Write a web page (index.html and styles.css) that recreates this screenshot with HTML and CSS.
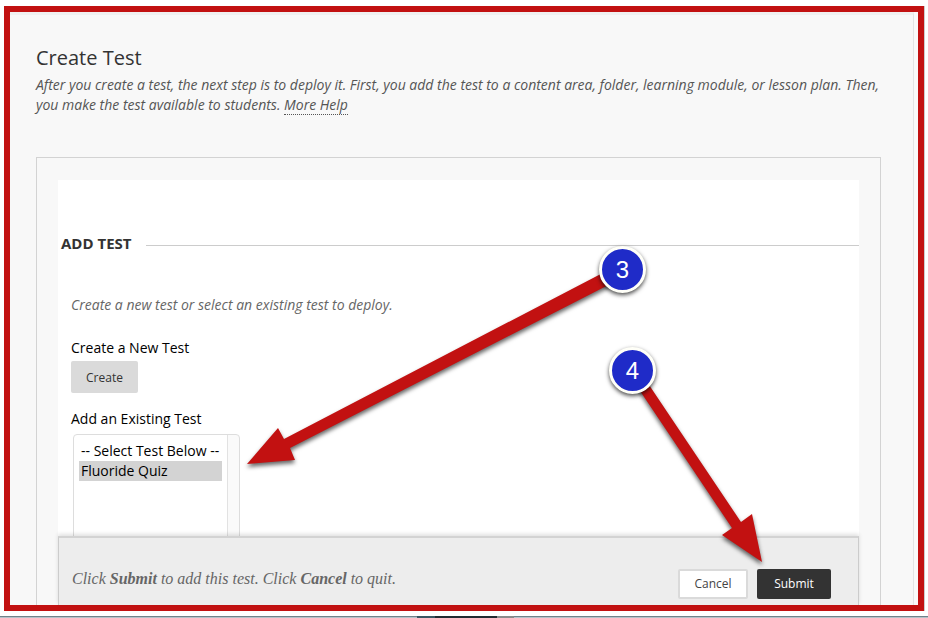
FILE: index.html
```
<!DOCTYPE html>
<html lang="en">
  <head>
    <meta charset="UTF-8" />
    <meta name="viewport" content="width=device-width, initial-scale=1.0" />
    <title>Create Test</title>
    <link rel="stylesheet" href="styles.css">
  </head>
  <body>
    <main class="frame">
      <div class="page">
        <header>
          <h1>Create Test</h1>
          <p class="help">
            After you create a test, the next step is to deploy it. First, you add the test to a content area, folder, learning module, or lesson plan. Then, you make the test available to students. <a href="#">More Help</a>
          </p>
        </header>

        <form class="panel">
          <div class="content">
            <h2><span>ADD TEST</span></h2>
            <div class="fields">
              <p class="hint">Create a new test or select an existing test to deploy.</p>
              <label for="create">Create a New Test</label>
              <button type="button" class="create" id="create">Create</button>
              <label for="tests">Add an Existing Test</label>
              <select id="tests" size="6">
                <option>-- Select Test Below --</option>
                <option selected>Fluoride Quiz</option>
              </select>
            </div>
          </div>
          <footer>
            <p>Click <b>Submit</b> to add this test. Click <b>Cancel</b> to quit.</p>
            <button type="button" class="cancel">Cancel</button>
            <button type="button" class="submit">Submit</button>
          </footer>
        </form>
      </div>
    </main>
    <div class="taskbar"></div>

    <!-- step arrows -->
    <svg class="arrows" width="928" height="618" viewBox="0 0 928 618">
      <polygon points="247,464 278,428 284,439 618,265 624,277 290,448 295,460" />
      <polygon points="762,562 722,535 732,528 626,370 635,364 741,522 752,514" />
    </svg>
    <span class="step step-3">3</span>
    <span class="step step-4">4</span>
  </body>
</html>
```

FILE: styles.css
```
* {
  box-sizing: border-box;
  margin: 0;
  padding: 0;
  font-family: "Open Sans", "Noto Sans", sans-serif;
}
body {
  position: relative;
  display: flex;
  flex-direction: column;
  height: 100vh;
  padding: 6px 4px 0 4px;
  overflow: hidden;
  background-color: white;
}
.frame {
  display: flex;
  flex: 1;
  min-height: 0;
  border: 6px solid #c21111;
  background-color: #fafafa;
  box-shadow: 1px 0 0 #ccc;
}
.page {
  display: flex;
  flex-direction: column;
  flex: 1;
  margin-right: 4px;
  padding: 30px 32px 0 26px;
  border-top: 3px solid #f0f0f0;
  border-right: 1px solid #e4e4e4;
  background-color: #f8f8f8;
}
h1 {
  font-size: 20px;
  font-weight: 400;
  line-height: 26px;
  color: #333;
}
.help {
  margin-top: 4px;
  font-size: 14px;
  font-style: italic;
  line-height: 20px;
  color: #555;
}
.help a {
  color: #555;
  text-decoration: none;
  border-bottom: 1px dotted #555;
}
.panel {
  display: flex;
  flex-direction: column;
  flex: 1;
  min-height: 0;
  margin-top: 42px;
  padding: 22px 21px 0 21px;
  border: 1px solid #d3d3d3;
  border-bottom: none;
}
.content {
  flex: 1;
  min-height: 0;
  padding-top: 51px;
  overflow: hidden;
  background-color: white;
}
h2 {
  display: flex;
  align-items: center;
  padding-left: 3px;
  font-size: 15px;
  font-weight: 700;
  line-height: 24px;
  color: #333;
}
h2::after {
  content: "";
  flex: 1;
  height: 1px;
  margin: 5px 0 0 14px;
  background-color: #ccc;
}
.fields {
  display: flex;
  flex-direction: column;
  align-items: flex-start;
  padding: 40px 13px 0 13px;
}
.hint {
  margin-bottom: 23px;
  font-size: 14px;
  font-style: italic;
  line-height: 20px;
  color: #666;
}
label {
  font-size: 14px;
  line-height: 20px;
  color: #000;
}
button {
  height: 30px;
  border: none;
  border-radius: 2px;
  font-size: 12px;
  cursor: pointer;
}
.create {
  width: 67px;
  height: 32px;
  margin: 3px 0 16px 0;
  background-color: #dadada;
  color: #333;
}
/* the right strip is the empty scrollbar track */
select {
  width: 167px;
  height: 140px;
  margin: 5px 0 0 2px;
  padding: 6px 17px 6px 5px;
  border: 1px solid #ddd;
  border-radius: 4px;
  background: linear-gradient(90deg, #e2e2e2 1px, #fafafa 1px) right / 12px 100% no-repeat white;
  font-size: 14px;
  color: #000;
  outline: none;
}
option {
  min-height: 20px;
  padding: 0 2px;
  line-height: 20px;
}
option:checked {
  background: linear-gradient(#d3d3d3, #d3d3d3);
  color: #000;
}
footer {
  position: relative;
  display: flex;
  align-items: center;
  height: 69px;
  padding: 24px 27px 0 13px;
  border: 1px solid #ccc;
  border-top: 2px solid #d3d3d3;
  border-bottom: none;
  background-color: #ededed;
  box-shadow: 0 -2px 4px rgba(0, 0, 0, 0.12);
}
footer p {
  flex: 1;
  padding-bottom: 10px;
  font-size: 16px;
  font-style: italic;
  color: #666;
}
footer p,
footer b {
  font-family: "Liberation Serif", serif;
}
.cancel {
  width: 70px;
  margin-right: 9px;
  border: 2px solid #dadada;
  background-color: white;
  color: #444;
}
.submit {
  width: 74px;
  background-color: #333;
  color: white;
}
.taskbar {
  height: 2px;
  margin: 5px -4px 0 -4px;
  background:
    linear-gradient(90deg, #3a5561 18px, #222a30 18px 80px, #8b8b8b 80px) 417px 0 / 97px 2px no-repeat,
    linear-gradient(#71828a 1px, #b5c2c9 1px);
}

.arrows {
  position: absolute;
  top: 0;
  left: 0;
  fill: #c21111;
  filter: drop-shadow(0 3px 2px rgba(0, 0, 0, 0.6));
}
.step {
  position: absolute;
  width: 47px;
  height: 47px;
  border: 3px solid #fffff8;
  border-radius: 50%;
  background-color: #1f2bc8;
  box-shadow: 0 2px 4px rgba(0, 0, 0, 0.7);
  font-family: "Liberation Sans", sans-serif;
  font-size: 24px;
  line-height: 41px;
  text-align: center;
  color: white;
}
.step-3 {
  top: 246px;
  left: 599px;
}
.step-4 {
  top: 347px;
  left: 609px;
}
```
